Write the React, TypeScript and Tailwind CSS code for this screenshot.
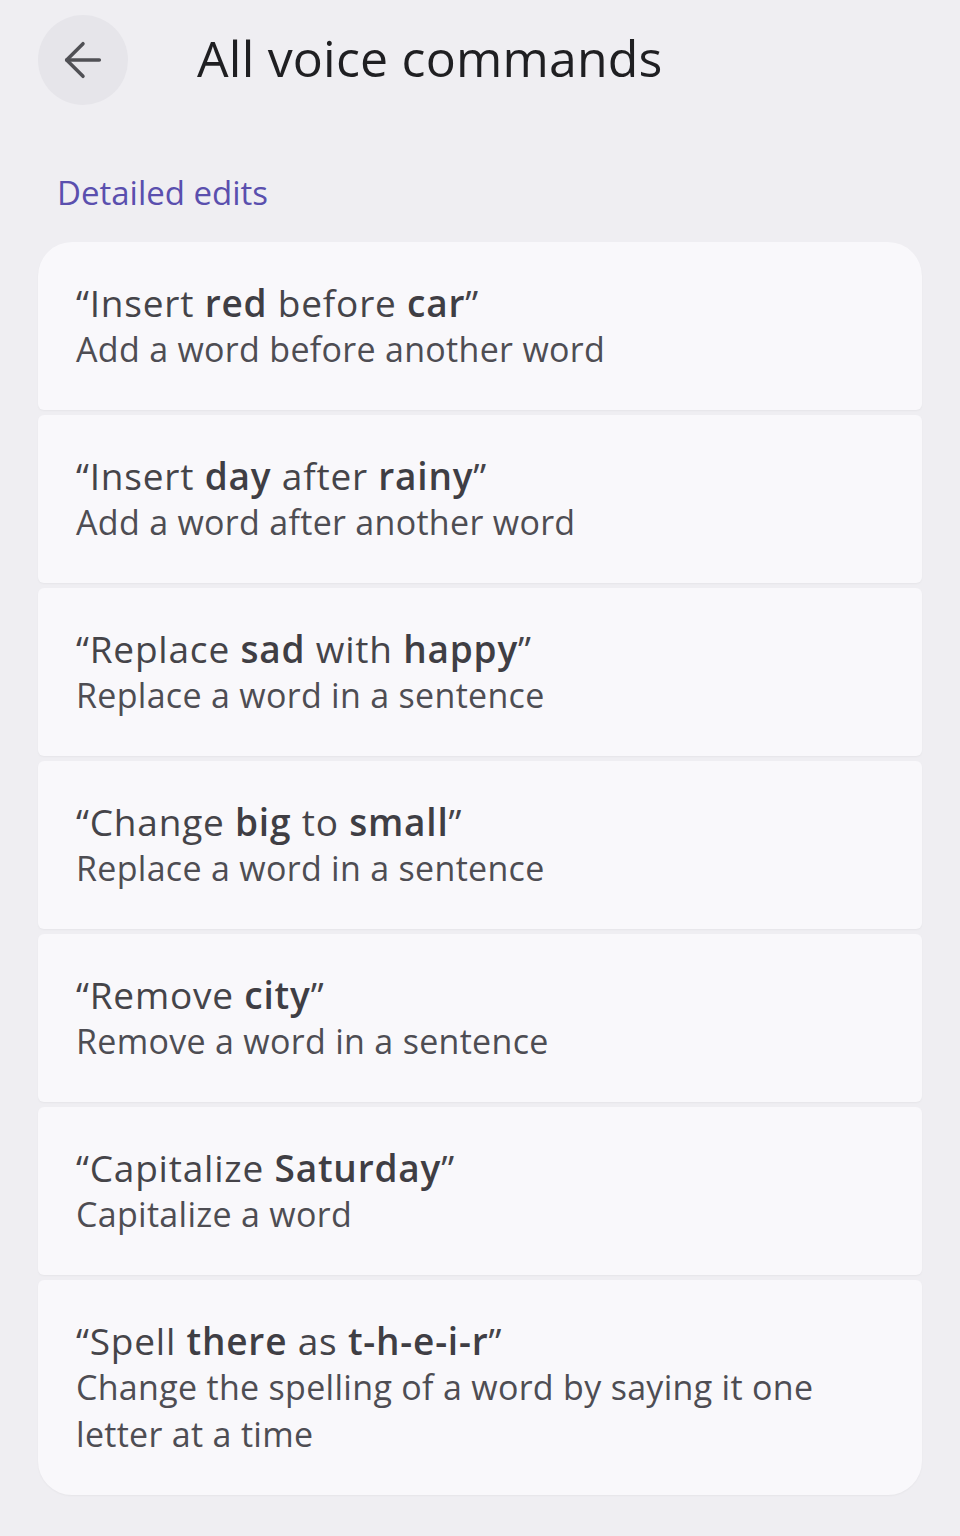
import { ArrowLeft } from "lucide-react";

type Cmd = { parts: [string, boolean][]; desc: string };

const commands: Cmd[] = [
  { parts: [["Insert ", false], ["red", true], [" before ", false], ["car", true]], desc: "Add a word before another word" },
  { parts: [["Insert ", false], ["day", true], [" after ", false], ["rainy", true]], desc: "Add a word after another word" },
  { parts: [["Replace ", false], ["sad", true], [" with ", false], ["happy", true]], desc: "Replace a word in a sentence" },
  { parts: [["Change ", false], ["big", true], [" to ", false], ["small", true]], desc: "Replace a word in a sentence" },
  { parts: [["Remove ", false], ["city", true]], desc: "Remove a word in a sentence" },
  { parts: [["Capitalize ", false], ["Saturday", true]], desc: "Capitalize a word" },
  { parts: [["Spell ", false], ["there", true], [" as ", false], ["t-h-e-i-r", true]], desc: "Change the spelling of a word by saying it one letter at a time" },
];

export default function App() {
  return (
    <div
      className="min-h-[1536px] bg-[#efeef2] text-[#1f1f22]"
      style={{ fontFamily: "'Open Sans', 'Noto Sans', sans-serif" }}
    >
      <div className="flex items-center h-[120px] pl-[38px]">
        <div className="w-[90px] h-[90px] rounded-full bg-[#e6e5ea] flex items-center justify-center">
          <ArrowLeft size={56} strokeWidth={1.5} color="#505055" />
        </div>
        <h1 className="ml-[69px] text-[50px] leading-none tracking-[0.2px] text-[#1f1f22] -mt-1">All voice commands</h1>
      </div>

      <div className="pl-[57px] pt-[56px] pb-[33px] text-[33px] leading-none text-[#5a4fae]">Detailed edits</div>

      <div className="mx-[38px] flex flex-col gap-[5px]">
        {commands.map((c, i) => (
          <div
            key={i}
            className={
              "bg-[#f9f8fb] pl-[38px] pr-[30px] flex flex-col justify-center shadow-[0_1px_2px_rgba(0,0,0,0.04)] " +
              (i === 0 ? "rounded-t-[34px] rounded-b-[6px] h-[168px] " : "") +
              (i === commands.length - 1 ? "rounded-b-[34px] rounded-t-[6px] h-[215px] " : "") +
              (i > 0 && i < commands.length - 1 ? "rounded-[6px] h-[168px] " : "")
            }
          >
            <div className="text-[37px] leading-[47px] tracking-[0.8px] text-[#454449]">
              “
              {c.parts.map(([t, b], j) => (
                <span key={j} className={b ? "font-semibold text-[#3f3e44]" : ""}>
                  {t}
                </span>
              ))}
              ”
            </div>
            <div className="text-[34px] leading-[47px] tracking-[0.3px] text-[#4e4d53]">{c.desc}</div>
          </div>
        ))}
      </div>
    </div>
  );
}
